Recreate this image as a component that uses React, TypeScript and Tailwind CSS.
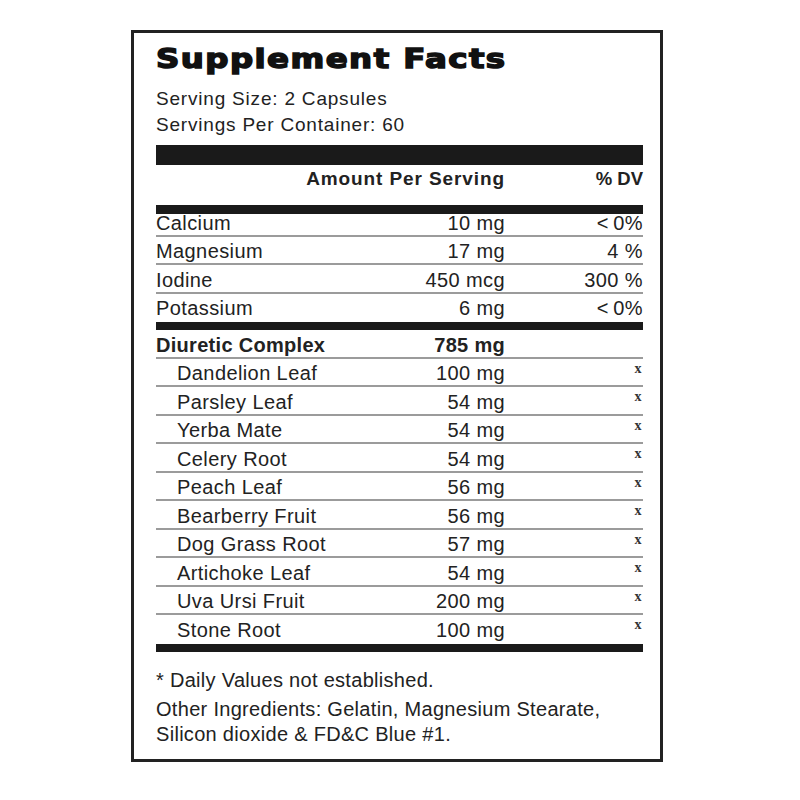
const minerals = [
  { name: "Calcium", amount: "10 mg", dv: "<\u20090%" },
  { name: "Magnesium", amount: "17 mg", dv: "4 %" },
  { name: "Iodine", amount: "450 mcg", dv: "300 %" },
  { name: "Potassium", amount: "6 mg", dv: "<\u20090%" },
];

const herbs = [
  { name: "Dandelion Leaf", amount: "100 mg" },
  { name: "Parsley Leaf", amount: "54 mg" },
  { name: "Yerba Mate", amount: "54 mg" },
  { name: "Celery Root", amount: "54 mg" },
  { name: "Peach Leaf", amount: "56 mg" },
  { name: "Bearberry Fruit", amount: "56 mg" },
  { name: "Dog Grass Root", amount: "57 mg" },
  { name: "Artichoke Leaf", amount: "54 mg" },
  { name: "Uva Ursi Fruit", amount: "200 mg" },
  { name: "Stone Root", amount: "100 mg" },
];

const sans = "font-['Liberation_Sans',Arial,sans-serif]";

export default function App() {
  return (
    <div className={`w-[800px] h-[800px] bg-white pt-[30px] pl-[131px] text-[#222] ${sans}`}>
      <div className="w-[532px] border-[3px] border-[#222] pl-[22px] pr-[17px] pb-[12px]">
        <h1 className="mt-[11px] origin-left scale-x-[1.2] text-[27px] leading-[30px] font-bold tracking-[1.2px] text-[#111] [-webkit-text-stroke:1.5px_#111] font-['DejaVu_Sans',sans-serif]">
          Supplement Facts
        </h1>
        <div className="mt-[12px] text-[19px] leading-[26px] tracking-[0.8px]">
          <p>Serving Size: 2 Capsules</p>
          <p>Servings Per Container: 60</p>
        </div>

        <div className="mt-[7px] h-5 bg-[#1a1a1a]" />

        <div className="flex h-[40px] items-start text-[19px] leading-[27px] font-bold tracking-[0.9px]">
          <span className="flex-1" />
          <span className="text-right">Amount Per Serving</span>
          <span className="w-[138px] text-right text-[18.5px] tracking-normal">% DV</span>
        </div>

        <div className="h-[9px] bg-[#1a1a1a]" />

        {minerals.map((m, i) => (
          <div
            key={m.name}
            className={`flex items-end text-[20px] leading-[24px] tracking-[0.4px] ${
              i === 0 ? "h-[23px]" : "h-[28.3px]"
            } ${i === minerals.length - 1 ? "pb-[2px]" : "border-b-2 border-[#9b9b9b]"}`}
          >
            <span className="flex-1">{m.name}</span>
            <span className="text-right">{m.amount}</span>
            <span className="w-[138px] text-right">{m.dv}</span>
          </div>
        ))}

        <div className="h-[8px] bg-[#1a1a1a]" />

        <div className="flex h-[29px] items-end border-b-2 border-[#9b9b9b] text-[20px] leading-[24px] font-bold tracking-[0.3px]">
          <span className="flex-1">Diuretic Complex</span>
          <span className="text-right">785 mg</span>
          <span className="w-[138px]" />
        </div>

        {herbs.map((h, i) => (
          <div
            key={h.name}
            className={`flex h-[28.5px] items-end text-[20px] leading-[24px] tracking-[0.4px] ${
              i === herbs.length - 1 ? "pb-[2px]" : "border-b-2 border-[#9b9b9b]"
            }`}
          >
            <span className="flex-1 pl-[21px]">{h.name}</span>
            <span className="text-right">{h.amount}</span>
            <span className="flex w-[138px] self-stretch justify-end pt-[3px] pr-[1px] text-[14px] leading-[14px] font-bold text-[#333] font-['Liberation_Serif',serif]">
              x
            </span>
          </div>
        ))}

        <div className="h-[8px] bg-[#1a1a1a]" />

        <p className="mt-[16px] text-[20px] leading-[24px] tracking-[0.3px]">
          * Daily Values not established.
        </p>
        <p className="mt-[5.5px] text-[20px] leading-[25px] tracking-[0.3px]">
          Other Ingredients: Gelatin, Magnesium Stearate,
          <br />
          Silicon dioxide &amp; FD&amp;C Blue #1.
        </p>
      </div>
    </div>
  );
}
